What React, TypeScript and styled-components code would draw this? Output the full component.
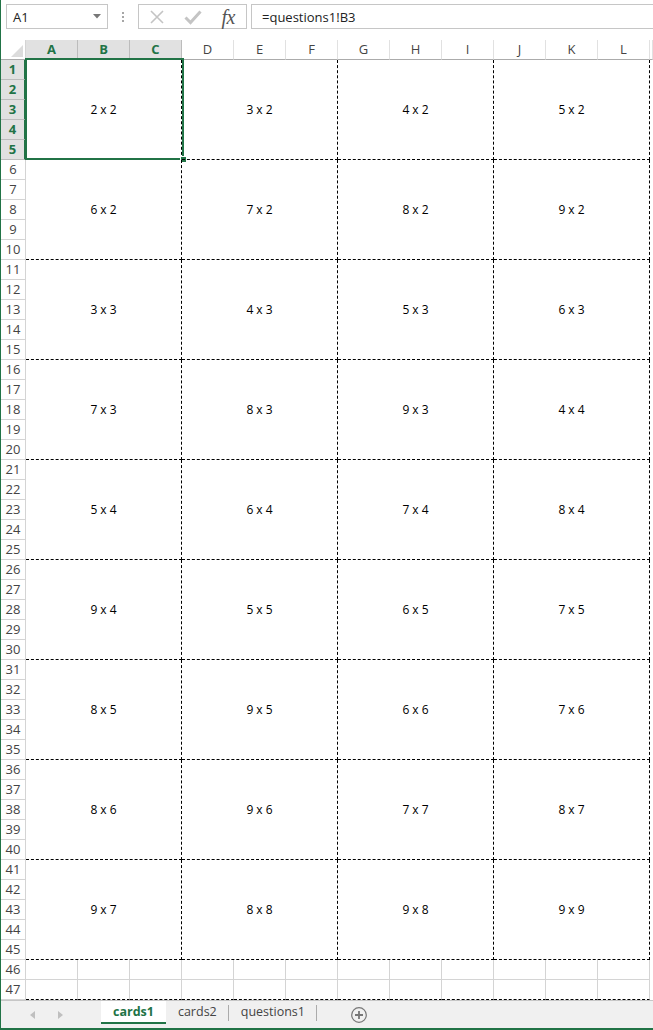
import styled, { createGlobalStyle } from "styled-components";

const GREEN = "#217346";

const GlobalStyle = createGlobalStyle`
  html, body {
    margin: 0;
    padding: 0;
    background: #fff;
    overflow: hidden;
  }
  body {
    font-family: "Open Sans", "Noto Sans", sans-serif;
  }
`;

const Window = styled.div`
  width: 653px;
  height: 1030px;
  box-sizing: border-box;
  border-left: 1px solid ${GREEN};
  border-bottom: 2px solid ${GREEN};
  display: flex;
  flex-direction: column;
  overflow: hidden;
  background: #fff;
`;

const FormulaBar = styled.div`
  height: 40px;
  flex-shrink: 0;
  box-sizing: border-box;
  padding: 4px 0 0 5px;
  display: flex;
  align-items: flex-start;
`;

const NameBox = styled.div`
  width: 102px;
  height: 25px;
  box-sizing: border-box;
  border: 1px solid #c6c6c6;
  display: flex;
  align-items: center;
  justify-content: space-between;
  padding: 0 6px;
  font-size: 13px;
  color: #222;
`;

const Dots = styled.div`
  width: 30px;
  height: 25px;
  display: flex;
  flex-direction: column;
  align-items: center;
  justify-content: center;
  gap: 2px;

  span {
    width: 2px;
    height: 2px;
    background: #a6a6a6;
  }
`;

const FxBox = styled.div`
  width: 109px;
  height: 25px;
  box-sizing: border-box;
  border: 1px solid #c6c6c6;
  display: flex;
  align-items: center;
`;

const FxSlot = styled.div`
  width: 36px;
  height: 100%;
  display: flex;
  align-items: center;
  justify-content: center;
`;

const FxText = styled.span`
  font-family: "Liberation Serif", "DejaVu Serif", serif;
  font-style: italic;
  font-size: 20px;
  color: #555;
  letter-spacing: -0.5px;
  line-height: 1;
`;

const FormulaInput = styled.div`
  flex: 1;
  margin-left: 4px;
  height: 25px;
  box-sizing: border-box;
  border: 1px solid #c6c6c6;
  border-right: none;
  padding-left: 10px;
  display: flex;
  align-items: center;
  font-size: 13px;
  color: #222;
`;

const HeaderRow = styled.div`
  height: 20px;
  flex-shrink: 0;
  display: flex;
`;

const Corner = styled.div`
  width: 25px;
  height: 20px;
  box-sizing: border-box;
  border-right: 1px solid #d4d4d4;
  border-bottom: 1px solid #ababab;
  display: flex;
  align-items: flex-end;
  justify-content: flex-end;
  padding: 0 2px 2px 0;
`;

const ColHeader = styled.div<{ $selected?: boolean; $fill?: boolean }>`
  width: ${(p) => (p.$fill ? "auto" : "52px")};
  flex: ${(p) => (p.$fill ? "1" : "none")};
  height: 20px;
  box-sizing: border-box;
  border-right: 1px solid ${(p) => (p.$selected ? "#bcbcbc" : "#e1e1e1")};
  border-bottom: ${(p) => (p.$selected ? `2px solid ${GREEN}` : "1px solid #ababab")};
  background: ${(p) => (p.$selected ? "#e1e1e1" : "#fff")};
  color: ${(p) => (p.$selected ? GREEN : "#444")};
  font-weight: ${(p) => (p.$selected ? 700 : 400)};
  font-size: 13px;
  line-height: 19px;
  text-align: center;
`;

const Body = styled.div`
  flex: 1;
  display: flex;
  min-height: 0;
`;

const RowHeaders = styled.div`
  width: 25px;
  flex-shrink: 0;
  display: flex;
  flex-direction: column;
`;

const RowHeader = styled.div<{ $selected?: boolean }>`
  height: 20px;
  box-sizing: border-box;
  border-bottom: 1px solid ${(p) => (p.$selected ? "#bcbcbc" : "#d4d4d4")};
  border-right: ${(p) => (p.$selected ? `2px solid ${GREEN}` : "1px solid #d4d4d4")};
  background: ${(p) => (p.$selected ? "#e1e1e1" : "#fff")};
  color: ${(p) => (p.$selected ? GREEN : "#444")};
  font-weight: ${(p) => (p.$selected ? 700 : 400)};
  font-size: 13px;
  line-height: 19px;
  text-align: center;
`;

const Sheet = styled.div`
  flex: 1;
  display: flex;
  flex-direction: column;
`;

const CardGrid = styled.div`
  display: grid;
  grid-template-columns: repeat(4, 156px);
  grid-auto-rows: 100px;
`;

const Card = styled.div`
  position: relative;
  box-sizing: border-box;
  border-right: 1px dashed #000;
  border-bottom: 1px dashed #000;
  display: flex;
  align-items: center;
  justify-content: center;
  font-size: 12px;
  color: #000;
`;

const Selection = styled.div`
  position: absolute;
  top: -2px;
  left: -1px;
  width: 159px;
  height: 102px;
  box-sizing: border-box;
  border: 2px solid ${GREEN};
  pointer-events: none;
`;

const FillHandle = styled.div`
  position: absolute;
  right: -5px;
  bottom: -5px;
  width: 5px;
  height: 5px;
  background: ${GREEN};
  border: 1px solid #fff;
`;

const PlainRow = styled.div`
  display: flex;
  height: 20px;
`;

const PlainCell = styled.div<{ $last?: boolean }>`
  width: 52px;
  height: 20px;
  box-sizing: border-box;
  border-right: 1px solid #d4d4d4;
  border-bottom: ${(p) => (p.$last ? "1px dashed #000" : "1px solid #d4d4d4")};
`;

const TabBar = styled.div`
  height: 28px;
  flex-shrink: 0;
  box-sizing: border-box;
  border-top: 1px solid #c6c6c6;
  background: #f0f0f0;
  display: flex;
  align-items: flex-start;
`;

const Nav = styled.div`
  width: 100px;
  height: 27px;
  display: flex;
  align-items: center;
  padding-left: 25px;
  gap: 16px;
  box-sizing: border-box;
`;

const NavArrow = styled.div`
  width: 12px;
  display: flex;
  justify-content: center;
`;

const Tab = styled.div<{ $active?: boolean }>`
  position: relative;
  height: 23px;
  box-sizing: border-box;
  padding: 0 12px;
  display: flex;
  align-items: center;
  font-size: 12.5px;
  background: ${(p) => (p.$active ? "#fff" : "transparent")};
  color: ${(p) => (p.$active ? GREEN : "#444")};
  font-weight: ${(p) => (p.$active ? 700 : 400)};
  border-bottom: ${(p) => (p.$active ? `2px solid ${GREEN}` : "2px solid transparent")};

  &::after {
    content: "";
    display: ${(p) => (p.$active ? "none" : "block")};
    position: absolute;
    right: 0;
    top: 4px;
    height: 16px;
    width: 1px;
    background: #ababab;
  }
`;

const AddButton = styled.div`
  margin-left: 34px;
  align-self: center;
  width: 16px;
  height: 16px;
  display: flex;
  align-items: center;
  justify-content: center;
`;

const cards = [
  ["2 x 2", "3 x 2", "4 x 2", "5 x 2"],
  ["6 x 2", "7 x 2", "8 x 2", "9 x 2"],
  ["3 x 3", "4 x 3", "5 x 3", "6 x 3"],
  ["7 x 3", "8 x 3", "9 x 3", "4 x 4"],
  ["5 x 4", "6 x 4", "7 x 4", "8 x 4"],
  ["9 x 4", "5 x 5", "6 x 5", "7 x 5"],
  ["8 x 5", "9 x 5", "6 x 6", "7 x 6"],
  ["8 x 6", "9 x 6", "7 x 7", "8 x 7"],
  ["9 x 7", "8 x 8", "9 x 8", "9 x 9"],
];

const columns = ["A", "B", "C", "D", "E", "F", "G", "H", "I", "J", "K", "L"];
const rows = Array.from({ length: 47 }, (_, i) => i + 1);

const App = () => {
  return (
    <>
      <GlobalStyle />
      <Window>
        <FormulaBar>
          <NameBox>
            <span>A1</span>
            <svg width="8" height="5" viewBox="0 0 8 5">
              <path d="M0 0 L8 0 L4 4.5 Z" fill="#777" />
            </svg>
          </NameBox>
          <Dots>
            <span />
            <span />
            <span />
          </Dots>
          <FxBox>
            <FxSlot>
              <svg width="16" height="16" viewBox="0 0 16 16">
                <path d="M2 2 L14 14 M14 2 L2 14" stroke="#c4c4c4" strokeWidth="1.6" fill="none" />
              </svg>
            </FxSlot>
            <FxSlot>
              <svg width="18" height="16" viewBox="0 0 18 16">
                <path d="M1.5 8.5 L6.5 13.5 L16.5 2.5" stroke="#c4c4c4" strokeWidth="3" fill="none" />
              </svg>
            </FxSlot>
            <FxSlot>
              <FxText>fx</FxText>
            </FxSlot>
          </FxBox>
          <FormulaInput>=questions1!B3</FormulaInput>
        </FormulaBar>

        <HeaderRow>
          <Corner>
            <svg width="12" height="12" viewBox="0 0 12 12">
              <path d="M12 0 L12 12 L0 12 Z" fill="#dcdcdc" />
            </svg>
          </Corner>
          {columns.map((c, i) => (
            <ColHeader key={c} $selected={i < 3}>
              {c}
            </ColHeader>
          ))}
          <ColHeader $fill />
        </HeaderRow>

        <Body>
          <RowHeaders>
            {rows.map((r) => (
              <RowHeader key={r} $selected={r <= 5}>
                {r}
              </RowHeader>
            ))}
          </RowHeaders>
          <Sheet>
            <CardGrid>
              {cards.flat().map((label, i) => (
                <Card key={i}>
                  {label}
                  {i === 0 && (
                    <Selection>
                      <FillHandle />
                    </Selection>
                  )}
                </Card>
              ))}
            </CardGrid>
            {[46, 47].map((r) => (
              <PlainRow key={r}>
                {columns.map((c) => (
                  <PlainCell key={c} $last={r === 47} />
                ))}
              </PlainRow>
            ))}
          </Sheet>
        </Body>

        <TabBar>
          <Nav>
            <NavArrow>
              <svg width="5" height="8" viewBox="0 0 5 8">
                <path d="M5 0 L5 8 L0 4 Z" fill="#bfbfbf" />
              </svg>
            </NavArrow>
            <NavArrow>
              <svg width="5" height="8" viewBox="0 0 5 8">
                <path d="M0 0 L0 8 L5 4 Z" fill="#bfbfbf" />
              </svg>
            </NavArrow>
          </Nav>
          <Tab $active>cards1</Tab>
          <Tab>cards2</Tab>
          <Tab>questions1</Tab>
          <AddButton>
            <svg width="16" height="16" viewBox="0 0 16 16">
              <circle cx="8" cy="8" r="7.3" stroke="#777" strokeWidth="1.2" fill="none" />
              <path d="M8 4 L8 12 M4 8 L12 8" stroke="#777" strokeWidth="1.8" />
            </svg>
          </AddButton>
        </TabBar>
      </Window>
    </>
  );
};

export default App;
